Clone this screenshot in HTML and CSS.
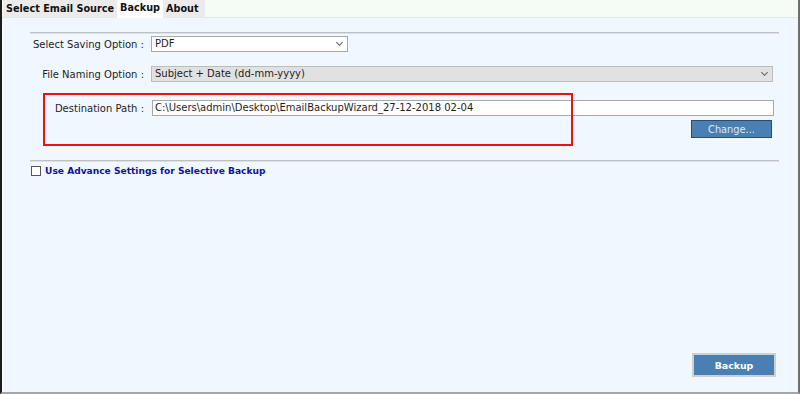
FILE: index.html
```html
<!DOCTYPE html>
<html lang="en">
<head>
    <meta charset="UTF-8">
    <title>Backup</title>
    <link rel="stylesheet" href="styles.css">
</head>
<body>
    <div class="window">
        <div class="tabs">
            <div class="tab">Select Email Source</div>
            <div class="tab tab--active">Backup</div>
            <div class="tab">About</div>
        </div>

        <div class="panel">
            <div class="rule"></div>

            <div class="row row--first">
                <label class="row__label">Select Saving Option :</label>
                <div class="combo combo--short">PDF<span class="combo__arrow"></span></div>
            </div>

            <div class="row row--second">
                <label class="row__label">File Naming Option :</label>
                <div class="combo combo--wide combo--disabled">Subject + Date (dd-mm-yyyy)<span class="combo__arrow"></span></div>
            </div>

            <div class="dest">
                <div class="highlight"></div>
                <div class="row row--path">
                    <label class="row__label">Destination Path :</label>
                    <div class="textbox">C:\Users\admin\Desktop\EmailBackupWizard_27-12-2018 02-04</div>
                </div>
                <div class="dest__actions">
                    <button class="btn btn--change">Change...</button>
                </div>
            </div>

            <div class="rule rule--second"></div>

            <div class="advance">
                <span class="checkbox"></span>
                <span class="advance__text">Use Advance Settings for Selective Backup</span>
            </div>

            <div class="footer">
                <button class="btn btn--backup">Backup</button>
            </div>
        </div>
    </div>
</body>
</html>
```

FILE: styles.css
```css
*, *::after, *::before {
    margin: 0;
    padding: 0;
    box-sizing: border-box;
}

body {
    width: 800px;
    height: 394px;
    font-family: "DejaVu Sans", Verdana, sans-serif;
    font-size: 10px;
    color: #1e1e1e;
    background-color: #f0f7ff;
    overflow: hidden;
}

.window {
    width: 800px;
    height: 394px;
    display: flex;
    flex-direction: column;
    border-left: 2px solid #1c1c1c;
    border-right: 2px solid #6e6e6e;
    border-bottom: 2px solid #a6a6a6;
}

/* Tabs */
.tabs {
    height: 18px;
    display: flex;
    padding-left: 1px;
    background-color: #f5fcf5;
    border-bottom: 1px solid #e2e8ec;
}

.tab {
    padding: 2px 3px 0 3px;
    font-weight: 700;
    font-size: 9.7px;
    color: #111;
    background-color: #ebebeb;
    line-height: 14px;
}

.tab:last-child {
    padding-right: 6px;
}

.tab--active {
    background-color: #ffffff;
    padding-top: 1px;
    margin-bottom: -1px;
}

/* Panel */
.panel {
    flex: 1;
    display: flex;
    flex-direction: column;
    padding: 14px 19px 15px 28px;
    background-color: #f0f7ff;
}

.rule {
    height: 2px;
    border-top: 1px solid #bcc0c4;
    border-bottom: 1px solid #dde2e6;
}

.row {
    display: flex;
    align-items: center;
}

.row__label {
    width: 115px;
    text-align: right;
    padding-right: 1px;
    flex-shrink: 0;
}

.row--first {
    margin-top: 2px;
}

.row--second {
    margin-top: 14px;
}

.combo {
    position: relative;
    height: 16px;
    margin-left: 6px;
    padding-left: 3px;
    line-height: 14px;
    border: 1px solid #a9a9a9;
    background-color: #ffffff;
}

.combo--short {
    width: 197px;
}

.combo--wide {
    width: 622px;
}

.combo--disabled {
    background-color: #e1e1e1;
    border-color: #bcbcbc;
}

.combo__arrow {
    position: absolute;
    right: 5px;
    top: 3px;
    width: 5px;
    height: 5px;
    border-right: 1px solid #666;
    border-bottom: 1px solid #666;
    transform: rotate(45deg);
}

/* Destination */
.dest {
    position: relative;
    margin-top: 18px;
}

.highlight {
    position: absolute;
    left: 13px;
    top: -7px;
    width: 530px;
    height: 53px;
    border: 2px solid #ee1111;
}

.row--path .textbox {
    margin-left: 7px;
}

.row--path .row__label {
    padding-top: 1px;
}

.textbox {
    width: 622px;
    height: 16px;
    padding-left: 2px;
    line-height: 14px;
    border: 1px solid #a9a9a9;
    background-color: #ffffff;
}

.dest__actions {
    display: flex;
    justify-content: flex-end;
    padding-right: 7px;
    margin-top: 4px;
}

.btn {
    font-family: "DejaVu Sans", Verdana, sans-serif;
    cursor: pointer;
    outline: none;
}

.btn--change {
    width: 81px;
    height: 18px;
    font-size: 9.8px;
    color: #dfe8f2;
    background-color: #4a7fb3;
    border: 1px solid #2e4b68;
}

.rule--second {
    margin-top: 22px;
}

/* Advance settings */
.advance {
    display: flex;
    align-items: center;
    margin-top: 4px;
    margin-left: 1px;
}

.checkbox {
    width: 10px;
    height: 10px;
    border: 1px solid #555;
    background-color: #fff;
    margin-right: 4px;
}

.advance__text {
    font-weight: 700;
    font-size: 9.1px;
    color: #12129a;
}

/* Footer */
.footer {
    margin-top: auto;
    display: flex;
    justify-content: flex-end;
    padding-right: 3px;
}

.btn--backup {
    width: 84px;
    height: 24px;
    font-weight: 700;
    font-size: 9.4px;
    color: #ffffff;
    background-color: #4a7fb3;
    border: 2px solid #cdcfd1;
}
```
